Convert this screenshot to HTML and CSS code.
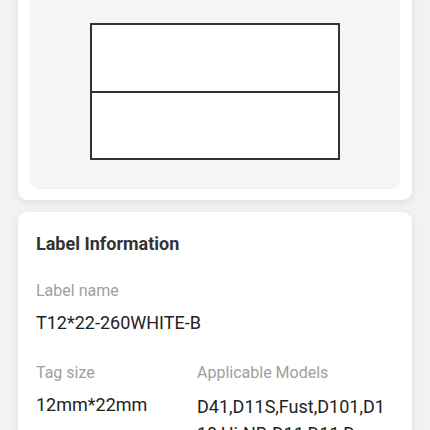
FILE: index.html
```html
<!DOCTYPE html>
<html>
<head>
<meta charset="utf-8">
<link rel="stylesheet" href="styles.css">
</head>
<body>
<div class="page">
  <div class="card preview-card">
    <div class="preview-box">
      <div class="label-shape">
        <div class="label-half"></div>
        <div class="label-half"></div>
      </div>
    </div>
  </div>
  <div class="card info-card">
    <div class="info-title">Label Information</div>
    <div class="field">
      <div class="field-label">Label name</div>
      <div class="field-value">T12*22-260WHITE-B</div>
    </div>
    <div class="field-grid">
      <div class="field">
        <div class="field-label">Tag size</div>
        <div class="field-value">12mm*22mm</div>
      </div>
      <div class="field">
        <div class="field-label">Applicable Models</div>
        <div class="field-value models">D41,D11S,Fust,D101,D110,Hi-NB-D11,D11,Dxx</div>
      </div>
    </div>
  </div>
</div>
</body>
</html>
```
FILE: styles.css
```css
html, body {
  margin: 0;
  padding: 0;
  background: #f2f2f2;
  font-family: Roboto, "Noto Sans", sans-serif;
  overflow: hidden;
  height: 430px;
}
.page {
  padding: 0 18px;
  display: flex;
  flex-direction: column;
  gap: 12px;
}
.card {
  background: #ffffff;
  border-radius: 9px;
  box-shadow: 0 2px 7px rgba(0,0,0,0.09);
}
.preview-card {
  margin-top: -17px;
  padding: 12px;
}
.preview-box {
  background: #f5f5f5;
  border-radius: 10px;
  box-shadow: 0 1px 1px rgba(0,0,0,0.06);
  padding: 28px 0;
  display: flex;
  justify-content: center;
}
.label-shape {
  width: 250px;
  height: 137px;
  box-sizing: border-box;
  border: 2px solid #333333;
  background: #ffffff;
  display: flex;
  flex-direction: column;
}
.label-half {
  flex: 1;
}
.label-half + .label-half {
  border-top: 2px solid #333333;
}
.info-card {
  padding: 20px 18px 0;
}
.info-title {
  font-size: 18px;
  font-weight: 700;
  color: #333333;
  line-height: 24px;
  margin-bottom: 25px;
}
.field {
  display: flex;
  flex-direction: column;
  gap: 10px;
  margin-bottom: 28px;
}
.field-label {
  font-size: 16px;
  color: #a0a0a0;
  line-height: 20px;
}
.field-value {
  font-size: 18px;
  color: #222222;
  line-height: 24px;
}
.field-grid {
  display: grid;
  grid-template-columns: 161px 1fr;
}
.models {
  word-break: break-all;
  line-height: 27px;
}
```
